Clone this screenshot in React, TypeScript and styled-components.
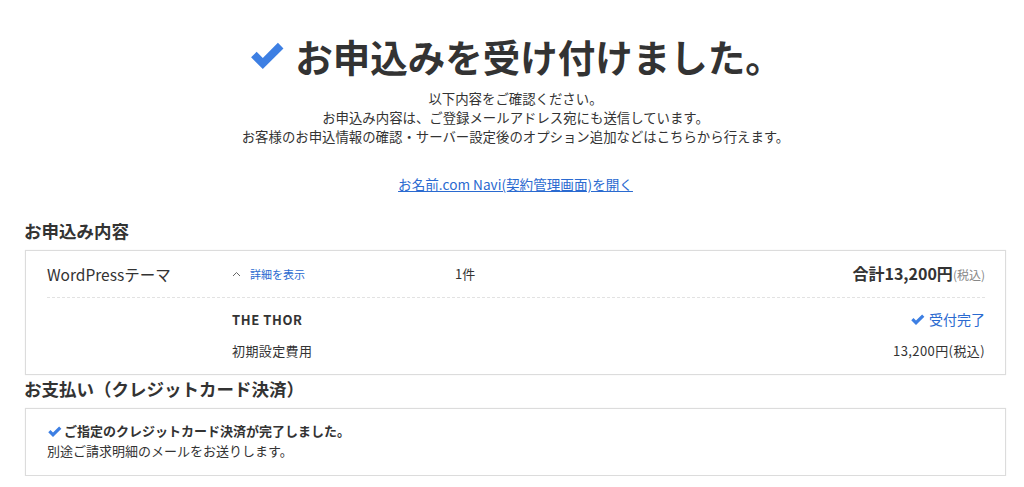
import styled, { createGlobalStyle } from "styled-components"

const GlobalStyle = createGlobalStyle`
  html, body {
    margin: 0;
    padding: 0;
    background: #fff;
  }
  body {
    font-family: "Noto Sans CJK JP", "Noto Sans", sans-serif;
    color: #333;
  }
`

const Page = styled.div`
  padding: 34px 18px 0 25px;
`

const Hero = styled.div`
  display: flex;
  flex-direction: column;
  align-items: center;
`

const Title = styled.h1`
  display: flex;
  align-items: center;
  gap: 10px;
  margin: 0;
  font-size: 37.5px;
  line-height: 43px;
  font-weight: 700;
  color: #333;
`

const Lead = styled.p`
  margin: 12px 0 0;
  font-size: 13.4px;
  line-height: 19px;
  text-align: center;
`

const NaviLink = styled.a`
  margin-top: 29px;
  font-size: 13.6px;
  line-height: 19px;
  color: #2a6ad0;
  text-decoration: underline;
`

const SectionTitle = styled.h2<{ $top: number }>`
  margin: ${(p) => p.$top}px 0 7px -1px;
  font-size: 17.5px;
  line-height: 24px;
  font-weight: 700;
`

const Box = styled.div`
  border: 1px solid #dcdcdc;
  box-shadow: 0 0 1px #e8e8e8;
`

const SummaryRow = styled.div`
  display: grid;
  grid-template-columns: 185px 223px 1fr auto;
  align-items: center;
  height: 46px;
  margin: 0 20px 0 21px;
  border-bottom: 1px dashed #e2e2e2;
  line-height: 20px;
`

const ItemName = styled.span`
  font-size: 15.5px;
`

const Toggle = styled.span`
  display: flex;
  align-items: center;
  gap: 9px;
  font-size: 11px;
  color: #2a6ad0;
`

const Count = styled.span`
  font-size: 13px;
`

const Total = styled.span`
  font-size: 16px;
  font-weight: 700;
  small {
    font-size: 12px;
    font-weight: 400;
    color: #888;
  }
`

const Details = styled.div`
  display: flex;
  flex-direction: column;
  gap: 12px;
  padding: 12px 20px 14px 206px;
`

const DetailRow = styled.div<{ $bold?: boolean }>`
  display: flex;
  justify-content: space-between;
  align-items: center;
  height: 19px;
  font-size: 13px;
  line-height: 19px;
  font-weight: ${(p) => (p.$bold ? 700 : 400)};
  letter-spacing: ${(p) => (p.$bold ? "0.6px" : "0.4px")};
`

const Done = styled.span`
  display: flex;
  align-items: center;
  gap: 4px;
  font-size: 14px;
  font-weight: 400;
  letter-spacing: 0;
  color: #2a6ad0;
`

const Payment = styled.div`
  padding: 12px 20px 14px 21px;
  font-size: 13px;
  line-height: 20px;
`

const PayDone = styled.div`
  display: flex;
  align-items: center;
  gap: 2px;
  font-weight: 700;
`

function Check({ size }: { size: number }) {
  return (
    <svg width={size} height={size} viewBox="0 0 24 24" aria-hidden>
      <path d="M2 13.2 L5.6 9.6 L9.6 13.6 L19.4 3.8 L23 7.4 L9.6 20.8 Z" fill="#3d7fe3" />
    </svg>
  )
}

function ChevronUp() {
  return (
    <svg width="9" height="6" viewBox="0 0 9 6" aria-hidden>
      <path d="M1 5 L4.5 1.5 L8 5" fill="none" stroke="#666" strokeWidth="1" />
    </svg>
  )
}

export default function App() {
  return (
    <>
      <GlobalStyle />
      <Page>
        <Hero>
          <Title>
            <Check size={37} />
            お申込みを受け付けました。
          </Title>
          <Lead>
            以下内容をご確認ください。
            <br />
            お申込み内容は、ご登録メールアドレス宛にも送信しています。
            <br />
            お客様のお申込情報の確認・サーバー設定後のオプション追加などはこちらから行えます。
          </Lead>
          <NaviLink href="#">お名前.com Navi(契約管理画面)を開く</NaviLink>
        </Hero>

        <SectionTitle $top={25}>お申込み内容</SectionTitle>
        <Box>
          <SummaryRow>
            <ItemName>WordPressテーマ</ItemName>
            <Toggle>
              <ChevronUp />
              詳細を表示
            </Toggle>
            <Count>1件</Count>
            <Total>
              合計13,200円<small>(税込)</small>
            </Total>
          </SummaryRow>
          <Details>
            <DetailRow $bold>
              <span>THE THOR</span>
              <Done>
                <Check size={15} />
                受付完了
              </Done>
            </DetailRow>
            <DetailRow>
              <span>初期設定費用</span>
              <span>13,200円(税込)</span>
            </DetailRow>
          </Details>
        </Box>

        <SectionTitle $top={2}>お支払い（クレジットカード決済）</SectionTitle>
        <Box>
          <Payment>
            <PayDone>
              <Check size={15} />
              ご指定のクレジットカード決済が完了しました。
            </PayDone>
            <div>別途ご請求明細のメールをお送りします。</div>
          </Payment>
        </Box>
      </Page>
    </>
  )
}
